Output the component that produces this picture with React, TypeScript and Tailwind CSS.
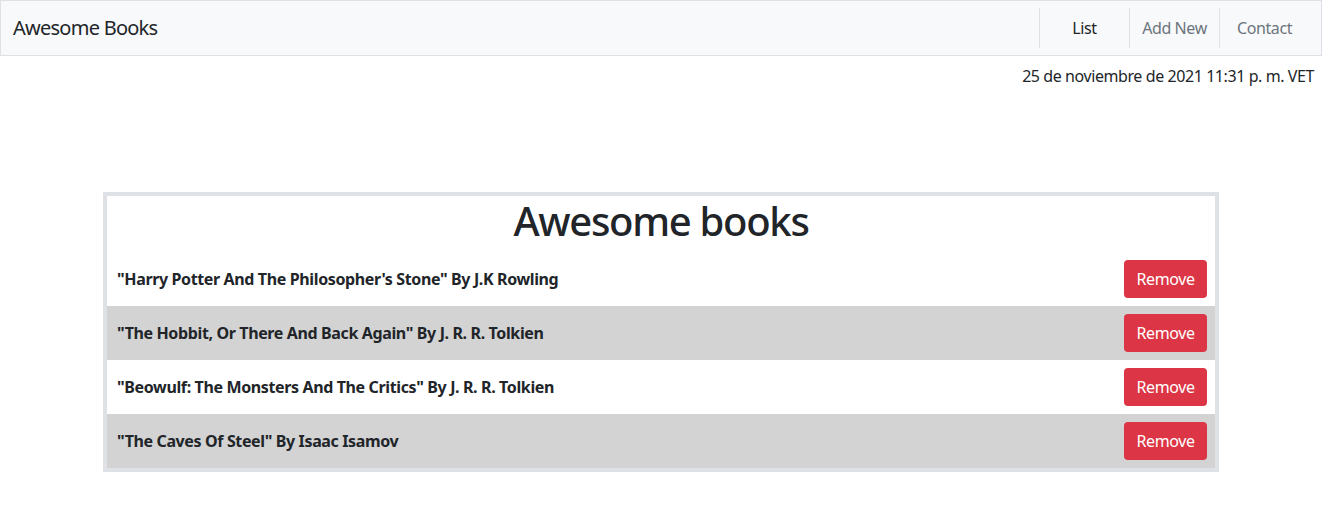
const books = [
  { title: "Harry Potter And The Philosopher's Stone", author: "J.K Rowling" },
  { title: "The Hobbit, Or There And Back Again", author: "J. R. R. Tolkien" },
  { title: "Beowulf: The Monsters And The Critics", author: "J. R. R. Tolkien" },
  { title: "The Caves Of Steel", author: "Isaac Isamov" },
];

const App = () => {
  return (
    <div className="min-h-[509px] bg-white text-[#212529] font-['Noto_Sans',sans-serif]">
      <nav className="flex h-14 items-center justify-between border border-[#dee2e6] bg-[#f8f9fa] pl-3 pr-3">
        <span className="text-xl tracking-[-0.75px] text-[#212529]">Awesome Books</span>
        <ul className="flex h-10 items-stretch tracking-[-0.4px]">
          <li className="flex w-[90px] items-center justify-center border-l border-[#dee2e6] text-[#212529]">List</li>
          <li className="flex w-[90px] items-center justify-center border-l border-[#dee2e6] text-[#6c757d]">Add New</li>
          <li className="flex w-[90px] items-center justify-center border-l border-[#dee2e6] text-[#6c757d]">Contact</li>
        </ul>
      </nav>
      <p className="mt-2 pr-2 text-right text-base tracking-[-0.42px]">25 de noviembre de 2021 11:31 p. m. VET</p>
      <main className="mx-[103px] mt-[104px] border-4 border-[#dee2e6]">
        <h1 className="mb-2 pt-[2px] text-center text-[40px] font-medium leading-[46px] tracking-[-1.3px]">Awesome books</h1>
        <ul>
          {books.map((b, i) => (
            <li
              key={b.title}
              className={`flex h-[54px] items-center justify-between pl-[10px] pr-2 ${i % 2 === 1 ? "bg-[#d3d3d3]" : "bg-white"}`}
            >
              <span className="font-bold tracking-[-0.37px]">"{b.title}" By {b.author}</span>
              <button className="h-[38px] w-[83px] rounded bg-[#dc3545] text-white tracking-[-0.4px]">Remove</button>
            </li>
          ))}
        </ul>
      </main>
    </div>
  );
};

export default App;
